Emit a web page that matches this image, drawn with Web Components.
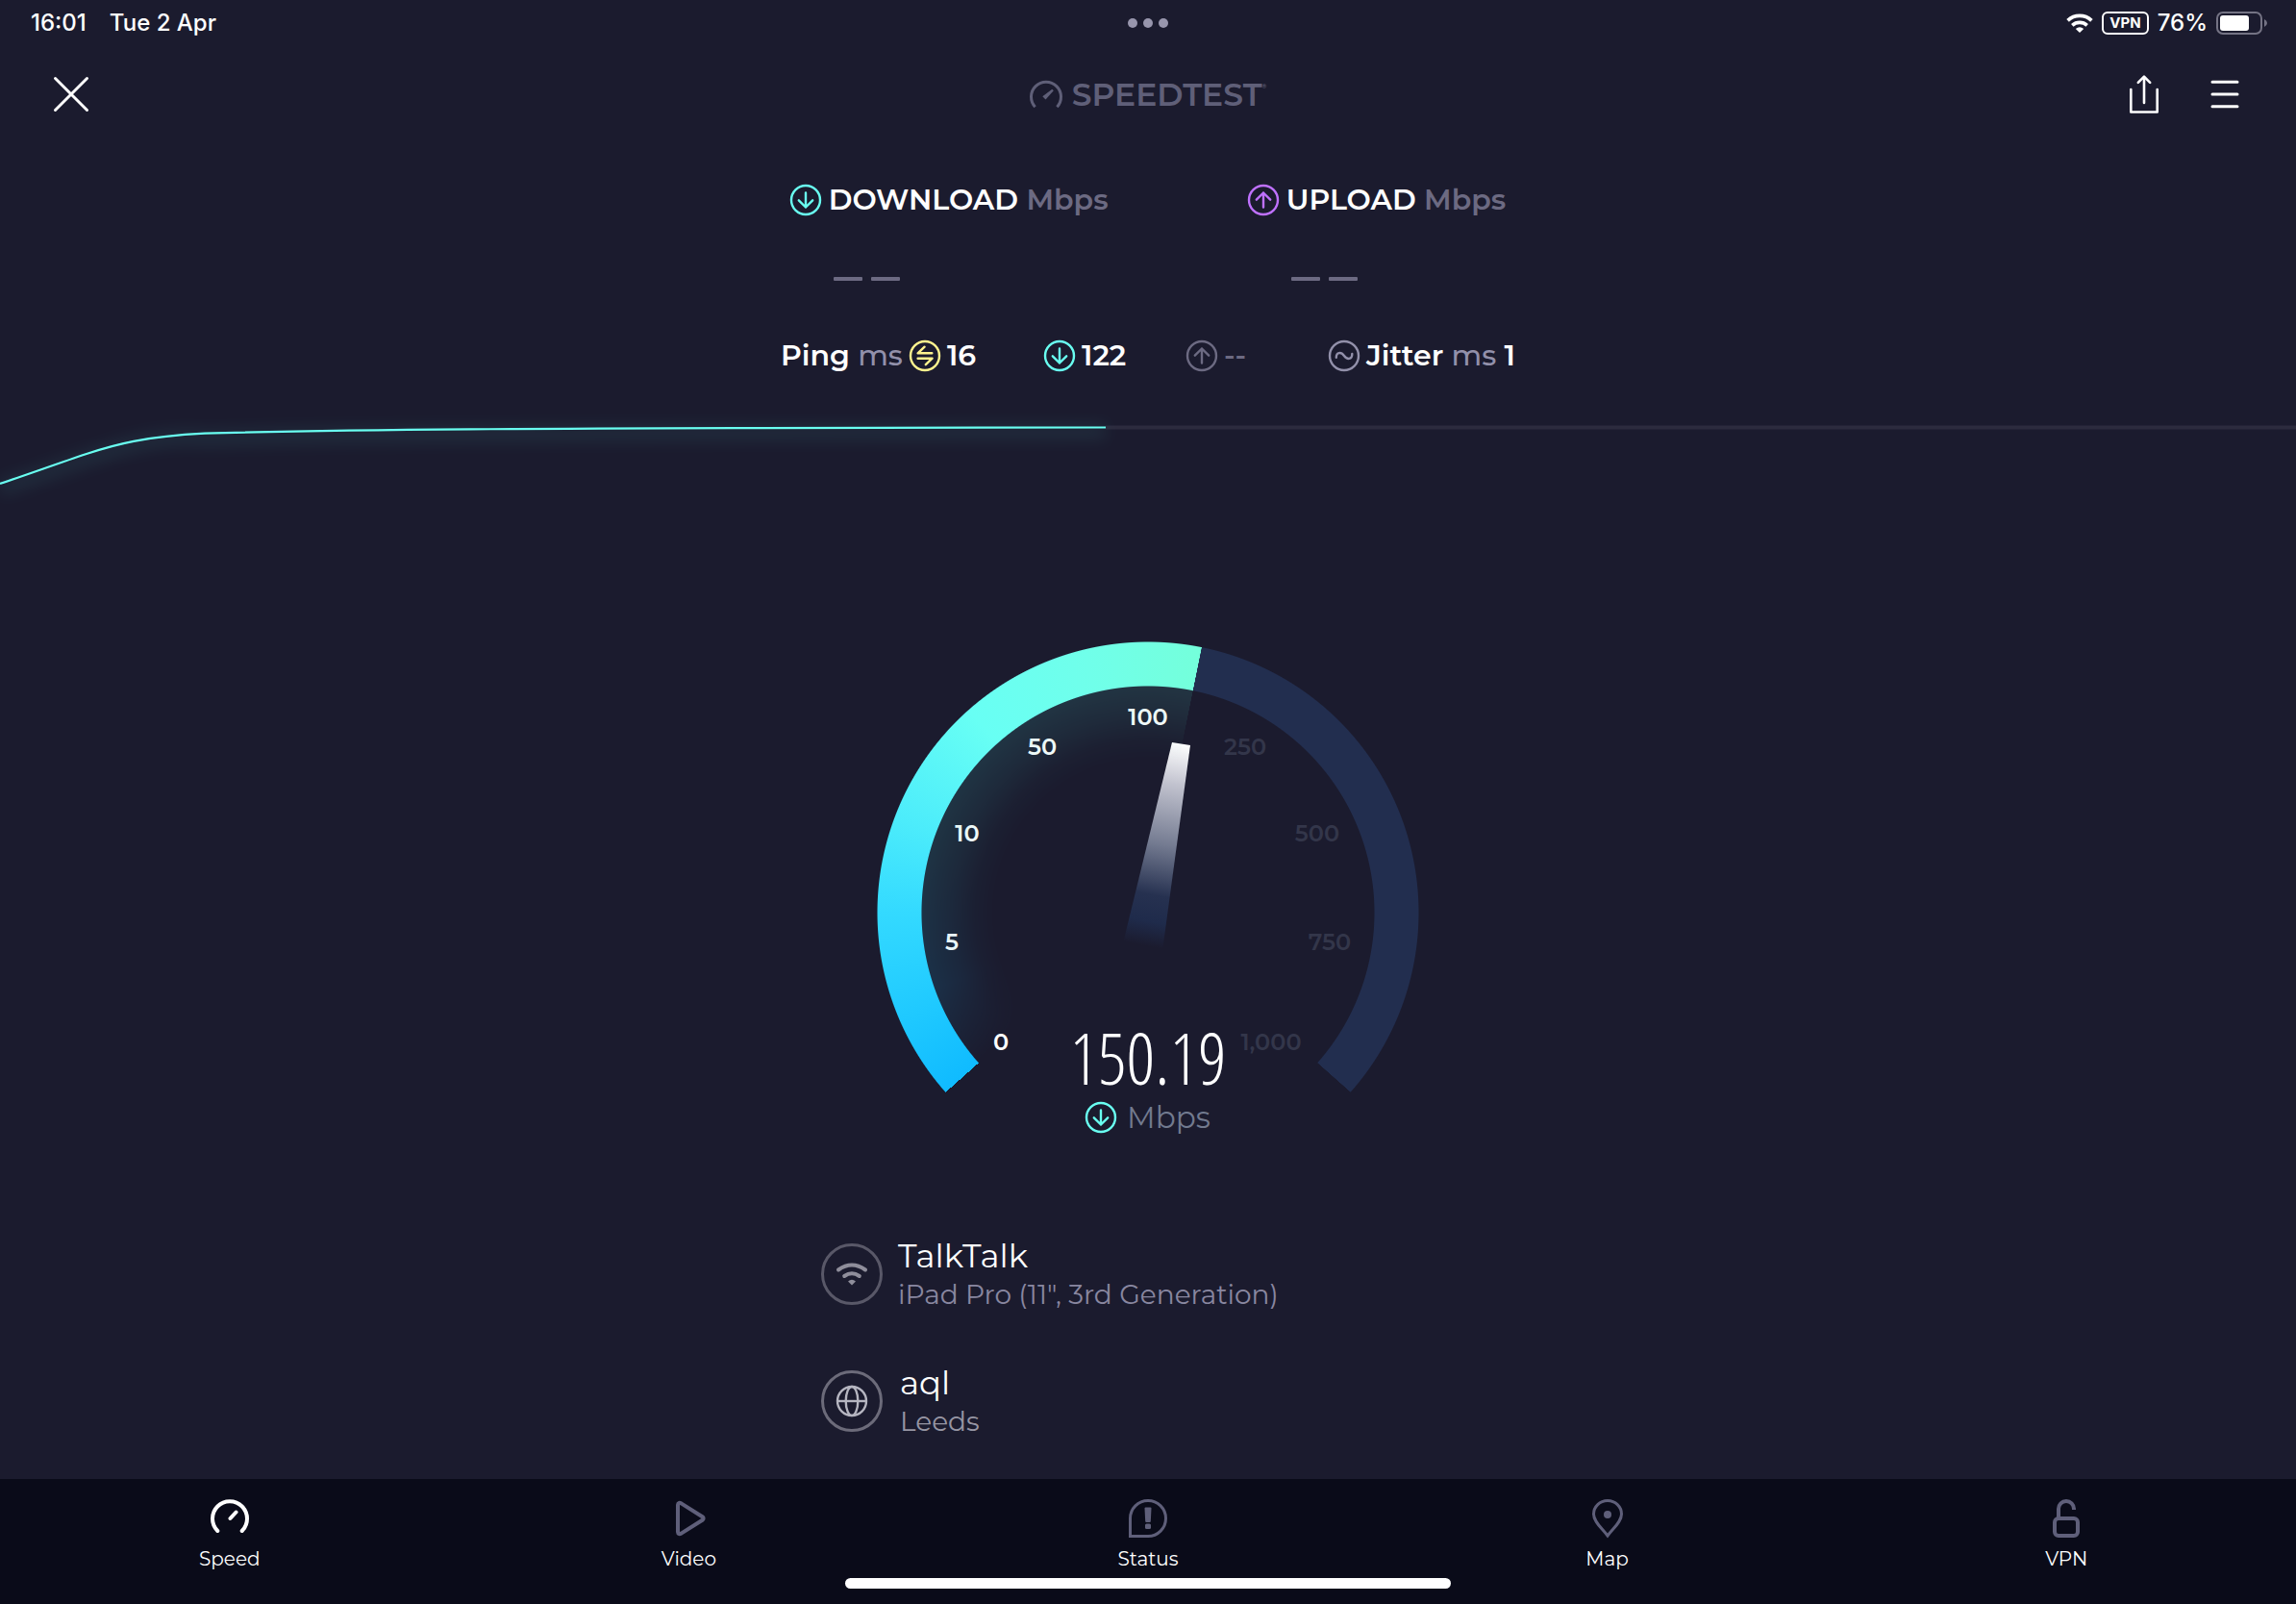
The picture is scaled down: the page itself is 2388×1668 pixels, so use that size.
<!DOCTYPE html>
<html lang="en">
<head>
<meta charset="utf-8">
<meta name="viewport" content="width=device-width, initial-scale=1">
<title>Speedtest</title>
<style>
  html, body { margin: 0; background: #1b1b2e; }
  body { font-family: Montserrat, Inter, "Open Sans", sans-serif; color: #fff; }
</style>
</head>
<body>
<speedtest-app></speedtest-app>

<script>
const define = (name, html, setup) => {
  const template = document.createElement('template');
  template.innerHTML = html;
  customElements.define(name, class extends HTMLElement {
    constructor() {
      super();
      this.attachShadow({ mode: 'open' }).append(template.content.cloneNode(true));
    }
    connectedCallback() { if (setup) setup(this, this.shadowRoot); }
  });
};

/* Icon set: [width, height, markup] */
const ring = '<circle cx="16" cy="16" r="15"/>';
const ICONS = {
  close: [36, 36, '<path d="M1.5 1.5 34.5 34.5M34.5 1.5 1.5 34.5" stroke-width="3" stroke-linecap="round"/>'],
  share: [30, 40, '<path d="M1.3 15v23.5h27.4V15M15 29V2.5M8.8 7.8 15 1.6l6.2 6.2" stroke-width="2.6" stroke-linecap="round" stroke-linejoin="round"/>'],
  menu: [30, 30, '<path d="M2 2.300h26M2 15h26M2 27.700h26" stroke-width="3" stroke-linecap="round"/>'],
  logo: [34, 28, '<path d="M5.600 27.200A15.500 15.500 0 1 1 28.400 27.200" stroke-width="3"/><path d="M13.300 16.300 16.500 19.500 24.800 10.200 23.300 8.800Z" fill="currentColor" stroke="none"/>'],
  down: [32, 32, ring + '<path d="M16 8.500v15M8.800 16.300 16 23.500l7.200-7.200" stroke-linecap="round" stroke-linejoin="round"/>'],
  up: [32, 32, ring + '<path d="M16 23.500v-15M8.800 15.700 16 8.500l7.200 7.200" stroke-linecap="round" stroke-linejoin="round"/>'],
  ping: [32, 32, ring + '<path d="M23.300 13.300H8.600l7-6.600M8.600 18.700h15l-6.800 6.500" stroke-linecap="round" stroke-linejoin="round"/>'],
  jitter: [32, 32, ring + '<path d="M7.800 17.800C7.800 11.800 13 11.800 16 16S24.300 20.200 24.300 14" stroke-linecap="round"/>'],
  wifi: [28, 20, '<path d="M1.600 7.300A18 18 0 0 1 26.400 7.300M6.300 12.300A11.500 11.500 0 0 1 21.700 12.300" stroke-width="3.700"/><path d="M9.800 16Q14 12.600 18.200 16L14 20Z" fill="currentColor" stroke="none"/>'],
  wifiRound: [32, 24, '<path d="M2 7.500Q16-2.500 30 7.500M8.200 14Q16 8.500 23.800 14" stroke-width="4" stroke-linecap="round"/><path d="M12 19.500Q16 15.800 20 19.500L16 23.500Z" fill="currentColor" stroke="none"/>'],
  globe: [32, 32, '<circle cx="16" cy="16" r="15"/><ellipse cx="16" cy="16" rx="6.300" ry="15"/><path d="M1 16h30"/>'],
  battery: [54, 24, '<rect x="1" y="1" width="46" height="22" rx="6" stroke="#747384" stroke-width="2"/><rect x="4" y="4" width="30" height="16" rx="3" fill="#fff" stroke="none"/><path d="M50 8v8q3-1.500 3-4t-3-4Z" fill="#747384" stroke="none"/>'],
  speed: [40, 40, '<path d="M7.300 33A18 18 0 1 1 32.700 33M20.500 20l6-6.500" stroke-width="4" stroke-linecap="round"/>'],
  video: [40, 40, '<path d="M9 6v28q.300 3.200 3.500 1.600l22-13.800q2.300-1.800 0-3.600l-22-13.800q-3.200-1.600-3.500 1.600Z" stroke-width="4" stroke-linejoin="round"/>'],
  status: [40, 40, '<path d="M1.500 38.500V20A18.500 18.500 0 1 1 20 38.500Z" stroke-width="3"/><path d="M16.500 9.500q0-1 1-1h5q1 0 1 1l-.700 13.500q0 1-1 1h-3.600q-1 0-1-1Z" fill="currentColor" stroke="none"/><rect x="17" y="25.500" width="6" height="5.500" rx="1.500" fill="currentColor" stroke="none"/>'],
  map: [40, 40, '<path d="M20 38C14 30 5.500 23.500 5.500 15.500a14.500 14 0 0 1 29 0C34.500 23.500 26 30 20 38Z" stroke-width="3"/><circle cx="20" cy="16" r="4" fill="currentColor" stroke="none"/>'],
  lock: [40, 40, '<rect x="8" y="20" width="24" height="18" rx="4" stroke-width="4"/><path d="M12 20V10a8 8 0 0 1 16 0v1" stroke-width="4"/>']
};
define('st-icon', `<style>
  :host { display: block; flex: none; }
  svg { display: block; fill: none; stroke: currentColor; stroke-width: 2.4; overflow: visible; }
</style>`, (el, root) => {
  const [w, h, body] = ICONS[el.getAttribute('name')];
  root.querySelector('svg')?.remove();
  root.querySelector('style').insertAdjacentHTML('afterend',
    `<svg width="${w}" height="${h}" viewBox="0 0 ${w} ${h}" aria-hidden="true">${body}</svg>`);
});

define('status-bar', `<style>
  :host { display: grid; grid-template-columns: 1fr auto 1fr; align-items: center; height: 48px;
          padding: 0 29px; font-family: Inter, sans-serif; font-size: 24px; line-height: 32px; font-weight: 500; }
  div { display: flex; align-items: center; }
  .time { gap: 24px; padding-left: 3px; }
  .dots { gap: 6px; }
  .dots i { width: 10px; height: 10px; border-radius: 50%; background: #9896ad; }
  .right { justify-content: flex-end; gap: 9px; }
  .vpn { box-sizing: border-box; height: 24px; border: 2px solid #fff; border-radius: 6px; padding: 0 6px;
         font-size: 15px; line-height: 20px; font-weight: 700; }
</style>
<div class="time"><span>16:01</span><span>Tue 2 Apr</span></div>
<div class="dots"><i></i><i></i><i></i></div>
<div class="right"><st-icon name="wifi"></st-icon><span class="vpn">VPN</span><span>76%</span><st-icon name="battery"></st-icon></div>`);

define('nav-bar', `<style>
  :host { display: grid; grid-template-columns: 1fr auto 1fr; align-items: center; height: 100px; padding: 0 56px; }
  button { all: unset; display: block; cursor: pointer; }
  .logo { display: flex; align-items: center; gap: 10px; color: #5f5f78; }
  .logo span { font-size: 33px; line-height: 36px; font-weight: 600; }
  .logo sup { font-size: 6px; line-height: 0; vertical-align: 18px; }
  .actions { display: flex; justify-content: flex-end; align-items: center; gap: 54px; padding-right: 3px; }
</style>
<div><button aria-label="Close"><st-icon name="close"></st-icon></button></div>
<div class="logo"><st-icon name="logo"></st-icon><span>SPEEDTEST<sup>®</sup></span></div>
<div class="actions"><button aria-label="Share"><st-icon name="share"></st-icon></button><button aria-label="Menu"><st-icon name="menu"></st-icon></button></div>`);

define('speed-result', `<style>
  :host { display: block; font-size: 30px; line-height: 40px; font-weight: 600; }
  .head { display: flex; align-items: center; gap: 8px; }
  .unit { color: #6c6a82; }
  .empty { display: flex; gap: 9px; padding: 60px 0 0 45px; }
  .empty i { width: 30px; height: 4px; border-radius: 1px; background: #6c6a82; }
</style>
<div class="head"><slot name="icon"></slot><span><slot></slot> <span class="unit">Mbps</span></span></div>
<div class="empty"><i></i><i></i></div>`);

define('latency-item', `<style>
  :host { display: flex; align-items: center; gap: 7px; font-size: 30px; line-height: 40px; font-weight: 600; }
</style><slot></slot>`);

define('results-panel', `<style>
  :host { display: flex; flex-direction: column; align-items: center; padding-top: 40px; }
  .speeds { display: grid; grid-template-columns: 476px auto; }
  .latency { display: grid; grid-template-columns: 274px 148px 148px auto; padding-top: 58px; }
  .down { color: #69fff1; } .up { color: #bf71ff; } .ping { color: #fff38e; }
  .unit { color: #9290aa; font-weight: 500; } .idle { color: #6c6a82; } .jit { color: #9290aa; }
</style>
<div class="speeds">
  <speed-result><st-icon slot="icon" class="down" name="down"></st-icon>DOWNLOAD</speed-result>
  <speed-result><st-icon slot="icon" class="up" name="up"></st-icon>UPLOAD</speed-result>
</div>
<div class="latency">
  <latency-item><span>Ping <span class="unit">ms</span></span><st-icon class="ping" name="ping"></st-icon><span>16</span></latency-item>
  <latency-item><st-icon class="down" name="down"></st-icon><span>122</span></latency-item>
  <latency-item class="idle"><st-icon name="up"></st-icon><span>--</span></latency-item>
  <latency-item><st-icon class="jit" name="jitter"></st-icon><span>Jitter <span class="unit">ms</span> 1</span></latency-item>
</div>`);

define('speed-graph', `<style>
  :host { display: block; }
  svg { display: block; width: 100%; height: auto; overflow: visible; }
</style>
<svg viewBox="0 0 2388 120" fill="none" role="img" aria-label="Download speed over time">
  <defs><filter id="glow" x="-5%" y="-60%" width="110%" height="260%"><feGaussianBlur stdDeviation="8"/></filter></defs>
  <path d="M1150 14.500H2388" stroke="#2c2b3e" stroke-width="4"/>
  <path d="M0 78C30 68 60 57 90 47S160 22 213 26C350 22 500 21 1150 19" stroke="#69fff1" stroke-width="16" opacity=".07" filter="url(#glow)"/>
  <path d="M0 73C30 63 60 52 90 42S150 24 213 20.700C350 17 500 15 1150 14.500" stroke="#69fff1" stroke-width="2.200"/>
</svg>`);

define('speed-gauge', `<style>
  :host { display: flex; flex-direction: column; align-items: center; }
  .dial { display: grid; grid-template: 470px / 564px; }
  .dial > * { grid-area: 1 / 1; }
  .arc, .glow { width: 564px; height: 564px; }
  .arc { background: conic-gradient(from 228.4deg, #10bbff 0deg, #1fc9ff 18deg, #34daff 42deg, #4cecfb 62deg, #68fff4 90deg, #70ffea 118deg, #74ffdb 143deg, #222e4f 143.100deg 263.100deg, transparent 263.200deg);
         -webkit-mask: radial-gradient(circle, transparent 235px, #000 236px 281px, transparent 282px);
         mask: radial-gradient(circle, transparent 235px, #000 236px 281px, transparent 282px); }
  .glow { background: conic-gradient(from 228.4deg, #1c9dcc00 0deg, #1c9dcc 22deg, #35b5b5 60deg, #4cb8ab 143deg, transparent 143.100deg);
          opacity: .16;
          -webkit-mask: radial-gradient(circle, transparent 158px, #0003 180px, #0009 204px, #000 235px, transparent 236px);
          mask: radial-gradient(circle, transparent 158px, #0003 180px, #0009 204px, #000 235px, transparent 236px); }
  svg { width: 564px; height: 564px; display: block; }
  text { font-size: 24px; font-weight: 600; text-anchor: middle; fill: #fff; }
  .off text { fill: #33364a; }
  .value { align-self: end; justify-self: center; font-family: "Open Sans Condensed Light", "Open Sans Condensed", Roboto, sans-serif;
           font-size: 74px; line-height: 74px; font-weight: 300; }
  .unit { display: flex; align-items: center; gap: 11px; padding-top: 4px; font-size: 31px; line-height: 42px; font-weight: 400; color: #727a8f; }
  .unit st-icon { color: #69fff1; }
</style>
<div class="dial">
  <div class="glow"></div>
  <div class="arc"></div>
  <svg viewBox="0 0 564 564">
    <defs><linearGradient id="needle" gradientUnits="userSpaceOnUse" x1="316" y1="106" x2="277" y2="316">
      <stop offset="0" stop-color="#fff"/><stop offset=".200" stop-color="#c2c3cf"/><stop offset=".500" stop-color="#747b91"/>
      <stop offset=".750" stop-color="#263150"/><stop offset=".880" stop-color="#1f2b4b"/><stop offset="1" stop-color="#1b1b2e"/>
    </linearGradient></defs>
    <path d="M307 105 326 108 297 322 256 314Z" fill="url(#needle)"/>
    <g><text x="129" y="425">0</text><text x="78" y="321">5</text><text x="94" y="208">10</text><text x="172" y="118">50</text><text x="282" y="87">100</text></g>
    <g class="off"><text x="383" y="118">250</text><text x="458" y="208">500</text><text x="471" y="321">750</text><text x="410" y="425">1,000</text></g>
  </svg>
  <div class="value">150.19</div>
</div>
<div class="unit"><st-icon name="down"></st-icon><span>Mbps</span></div>`);

define('connection-row', `<style>
  :host { display: flex; align-items: center; gap: var(--gap, 16px); color: var(--sub, #8987a0); }
  .badge { box-sizing: border-box; width: 64px; height: 64px; border: 3px solid var(--ring, #595868); border-radius: 50%; display: grid; place-items: center; flex: none; }
  .title { color: #fff; font-size: 34px; line-height: 42px; font-weight: 400; }
  .sub { font-size: 28px; line-height: 38px; font-weight: 400; }
</style>
<div class="badge"><slot name="icon"></slot></div>
<div><div class="title"><slot name="title"></slot></div><div class="sub"><slot></slot></div></div>`);

define('connection-info', `<style>
  :host { display: flex; flex-direction: column; gap: 52px; width: 680px; max-width: 100%; margin: 0 auto; }
  .wifi { color: #8f8e9b; } .globe { color: #b5b5c0; }
  .server { --gap: 18px; --sub: #9695a3; --ring: #6c6b7a; }
</style>
<connection-row><st-icon class="wifi" slot="icon" name="wifiRound"></st-icon><span slot="title">TalkTalk</span>iPad Pro (11", 3rd Generation)</connection-row>
<connection-row class="server"><st-icon class="globe" slot="icon" name="globe"></st-icon><span slot="title">aql</span>Leeds</connection-row>`);

define('tab-item', `<style>
  :host { display: block; flex: 1; color: #5f5f7a; }
  :host([selected]) { color: #fff; }
  a { display: flex; flex-direction: column; align-items: center; gap: 10px; color: inherit; text-decoration: none; }
  span { color: #fff; font-size: 20px; line-height: 24px; font-weight: 400; }
</style>
<a href="#"><slot name="icon"></slot><span><slot></slot></span></a>`);

define('tab-bar', `<style>
  :host { display: block; background: #0a0b19; padding: 21px 0 16px; }
  nav { display: flex; }
  .home { width: 630px; height: 11px; margin: 8px auto 0; border-radius: 6px; background: #fff; }
</style>
<nav>
  <tab-item selected><st-icon slot="icon" name="speed"></st-icon>Speed</tab-item>
  <tab-item><st-icon slot="icon" name="video"></st-icon>Video</tab-item>
  <tab-item><st-icon slot="icon" name="status"></st-icon>Status</tab-item>
  <tab-item><st-icon slot="icon" name="map"></st-icon>Map</tab-item>
  <tab-item><st-icon slot="icon" name="lock"></st-icon>VPN</tab-item>
</nav>
<div class="home"></div>`);

define('speedtest-app', `<style>
  :host { display: flex; flex-direction: column; min-height: 100vh; }
  main { flex: 1; display: flex; flex-direction: column; overflow: hidden; }
  speed-graph { margin-top: 40px; }
  speed-gauge { margin-top: 117px; }
  connection-info { margin-top: 102px; }
</style>
<status-bar></status-bar>
<nav-bar></nav-bar>
<main>
  <results-panel></results-panel>
  <speed-graph></speed-graph>
  <speed-gauge></speed-gauge>
  <connection-info></connection-info>
</main>
<tab-bar></tab-bar>`);
</script>
</body>
</html>
